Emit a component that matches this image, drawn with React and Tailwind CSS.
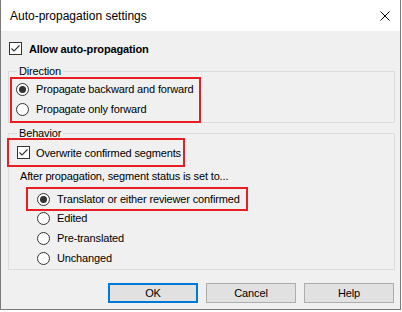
import React, { useState } from "react";

const FONT = { fontFamily: '"Liberation Sans", Arial, sans-serif' };

function CheckBox({ checked }) {
    return (
        <span className="w-[13px] h-[13px] border border-[#333333] bg-white flex items-center justify-center shrink-0">
            {checked && (
                <svg width="11" height="11" viewBox="0 0 11 11">
                    <path d="M1.5 5.5 L4 8 L9.5 2.5" fill="none" stroke="#333333" strokeWidth="1.1" />
                </svg>
            )}
        </span>
    );
}

function Radio({ checked }) {
    return (
        <span className="w-[13px] h-[13px] rounded-full border border-[#333333] bg-white flex items-center justify-center shrink-0">
            {checked && <span className="w-[7px] h-[7px] rounded-full bg-[#333333]" />}
        </span>
    );
}

function RadioRow({ label, checked, onClick }) {
    return (
        <div className="h-[20px] flex items-center gap-[7px]" onClick={onClick}>
            <Radio checked={checked} />
            <span className="whitespace-nowrap">{label}</span>
        </div>
    );
}

export default function App() {
    const [direction, setDirection] = useState("both");
    const [status, setStatus] = useState("translator");

    return (
        <div className="w-[402px] h-[312px] bg-white overflow-hidden text-[11px] leading-[14px] tracking-[-0.15px] text-black" style={FONT}>
            <div className="w-[401px] h-[310px] border-l border-r border-b border-[#7a7a7a] flex flex-col">
                {/* Title bar */}
                <div className="h-[31px] bg-white flex items-center justify-between pl-[9px] pr-[10px]">
                    <span className="text-[12px] tracking-normal">Auto-propagation settings</span>
                    <svg width="10" height="10" viewBox="0 0 10 10">
                        <path d="M0.5 0.5 L9.5 9.5 M9.5 0.5 L0.5 9.5" stroke="#000" strokeWidth="1" />
                    </svg>
                </div>

                {/* Body */}
                <div className="flex-1 bg-[#f0f0f0] pl-[7px] pr-[5px] flex flex-col">
                    <div className="mt-[11px] ml-[1px] h-[13px] flex items-center gap-[7px]">
                        <CheckBox checked />
                        <span className="font-bold whitespace-nowrap">Allow auto-propagation</span>
                    </div>

                    {/* Direction */}
                    <fieldset className="mt-[9px] border border-[#dcdcdc] flex flex-col">
                        <legend className="ml-[8px] px-[2px] h-[14px]">Direction</legend>
                        <div className="-mt-[1px] -mb-[1px] ml-[1px] w-[191px] border-2 border-[#e81e25] pl-[4px] pb-[2px]">
                            <RadioRow
                                label="Propagate backward and forward"
                                checked={direction === "both"}
                                onClick={() => setDirection("both")}
                            />
                            <RadioRow
                                label="Propagate only forward"
                                checked={direction === "forward"}
                                onClick={() => setDirection("forward")}
                            />
                        </div>
                    </fieldset>

                    {/* Behavior */}
                    <fieldset className="mt-[3px] border border-[#dcdcdc] flex flex-col pb-[1px]">
                        <legend className="ml-[8px] px-[2px] h-[14px]">Behavior</legend>
                        <div className="-mt-[2px] -ml-[2px] w-[178px] h-[29px] border-2 border-[#e81e25] pl-[8px] flex items-center gap-[6px]">
                            <CheckBox checked />
                            <span className="whitespace-nowrap">Overwrite confirmed segments</span>
                        </div>
                        <div className="mt-[2px] ml-[11px] whitespace-nowrap">After propagation, segment status is set to...</div>
                        <div className="mt-[4px] -mb-[3px] ml-[17px] w-[222px] border-2 border-[#e81e25] pl-[9px]">
                            <RadioRow
                                label="Translator or either reviewer confirmed"
                                checked={status === "translator"}
                                onClick={() => setStatus("translator")}
                            />
                        </div>
                        <div className="ml-[28px] flex flex-col">
                            <RadioRow label="Edited" checked={status === "edited"} onClick={() => setStatus("edited")} />
                            <RadioRow
                                label="Pre-translated"
                                checked={status === "pre"}
                                onClick={() => setStatus("pre")}
                            />
                            <RadioRow
                                label="Unchanged"
                                checked={status === "unchanged"}
                                onClick={() => setStatus("unchanged")}
                            />
                        </div>
                    </fieldset>

                    {/* Buttons */}
                    <div className="mt-[13px] mr-[1px] flex justify-end gap-[8px]">
                        <button className="w-[90px] h-[20px] bg-[#e1e1e1] border-2 border-[#0078d7]">OK</button>
                        <button className="w-[90px] h-[20px] bg-[#e1e1e1] border border-[#adadad]">Cancel</button>
                        <button className="w-[90px] h-[20px] bg-[#e1e1e1] border border-[#adadad]">Help</button>
                    </div>
                </div>
            </div>
        </div>
    );
}
